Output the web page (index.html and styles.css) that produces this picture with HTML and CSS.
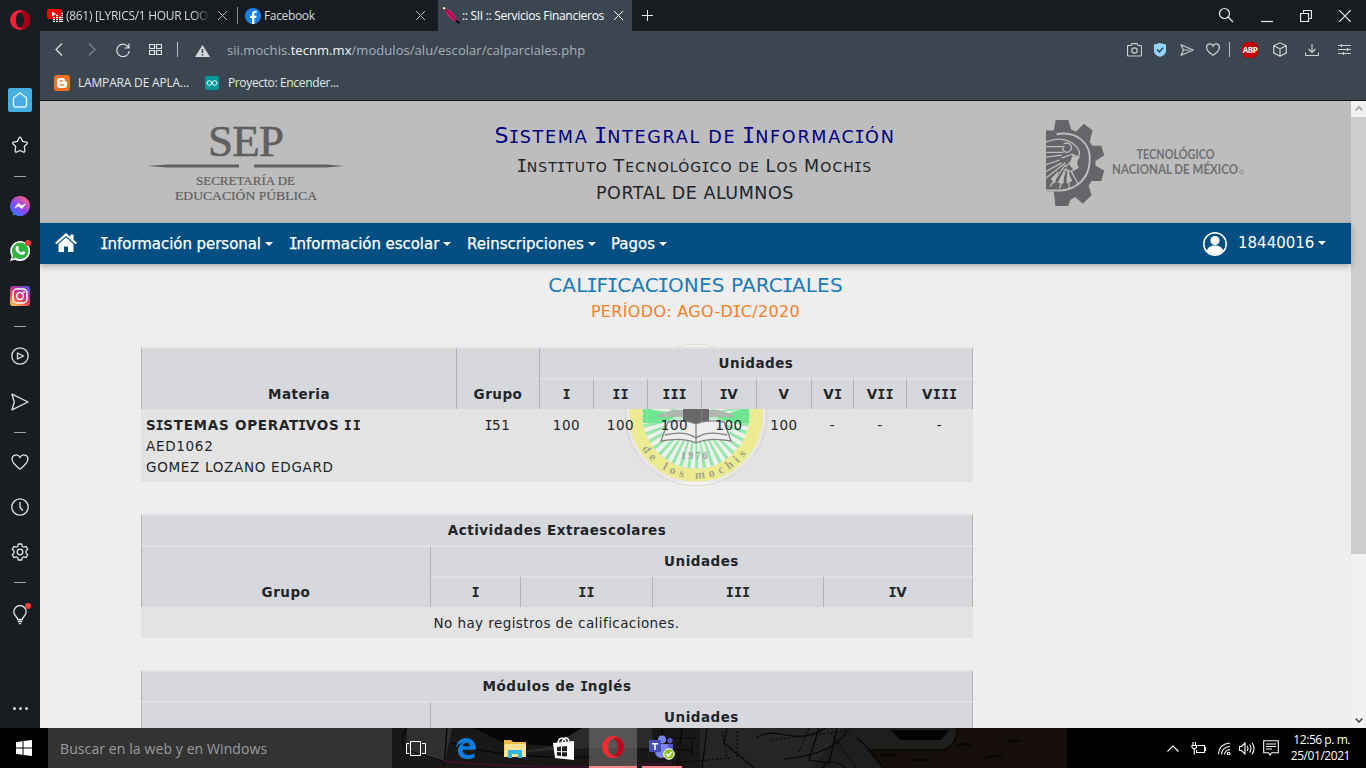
FILE: index.html
```html
<!DOCTYPE html>
<html lang="es">
<head>
<meta charset="utf-8">
<title>:: SII :: Servicios Financieros</title>
<link rel="stylesheet" href="styles.css">
</head>
<body>
<div class="screen">
  <aside class="side">
    <div class="slot slot-opera"><svg width="20" height="20" viewBox="0 0 20 20"><path fill="#fa1e36" fill-rule="evenodd" d="M10 0a10 10 0 1 0 0 20a10 10 0 0 0 0-20zM10 2.500c2.500 0 4.200 3.400 4.200 7.500s-1.700 7.500-4.200 7.500s-4.200-3.400-4.200-7.500s1.700-7.500 4.200-7.500z"/><path fill="#a70014" d="M10 2.500c2-1.800 5-1.500 6.700.1a10 10 0 0 1 0 14.800c-1.700 1.600-4.700 1.900-6.700.1c2.500 0 4.200-3.400 4.200-7.500s-1.700-7.500-4.200-7.500z"/></svg></div>
    <div class="slot slot-home"><span class="home-tile"><svg width="24" height="24" viewBox="0 0 24 24" class="ln thin"><path d="M5.500 10L12 4.800l6.500 5.200v7a2 2 0 0 1-2 2h-9a2 2 0 0 1-2-2z" stroke-linejoin="round"/></svg></span></div>
    <div class="slot"><svg width="18" height="18" viewBox="0 0 18 18" class="ln"><path d="M9 1.200q.6 0 1 .8l1.600 3.400l4 .7q1.300.5.500 1.600L13.300 10.500l.6 4.600q-.1 1.400-1.400 1L9 14.500l-3.500 1.600q-1.300.4-1.400-1l.6-4.600L1.900 7.700q-.8-1.100.5-1.600l4-.7L8 2q.4-.8 1-.8z" stroke-linejoin="round"/></svg></div>
    <div class="dash first"></div>
    <div class="slot"><svg width="20" height="20" viewBox="0 0 20 20"><defs><linearGradient id="ms" x1="0" y1="1" x2=".8" y2="0"><stop offset="0" stop-color="#168aff"/><stop offset=".5" stop-color="#8a45f5"/><stop offset="1" stop-color="#ff6670"/></linearGradient></defs><path fill="url(#ms)" d="M10 0a10 10 0 1 1-5.500 18.400L3 20v-3A10 10 0 0 1 10 0z"/><path fill="#fff" d="M4 12.500L8.200 7l3.600 2.500L16.300 7.300L12 13L8.400 10.500z"/></svg></div>
    <div class="slot badge"><svg width="20" height="20" viewBox="0 0 20 20"><path fill="#fff" d="M10 0a10 10 0 1 1-4.800 18.700L.2 20l1.500-4.800A10 10 0 0 1 10 0z"/><circle cx="10.200" cy="9.900" r="8.300" fill="#32b443"/><path d="M2 18l1-4l3 3z" fill="#32b443"/><path fill="#fff" d="M6.300 5.500c1-1 1.700-.8 2.200.9s-.3 1.300-.3 2c.8 1.400 1.700 2.300 3.300 3c.6-.2.900-1.500 1.600-1.200c2.200 1 2.400 1 1.700 2.300c-1.300 1.900-3.600 1.500-5.600.3c-2.700-1.700-4.800-4.700-2.900-7.300z"/></svg></div>
    <div class="slot"><svg width="20" height="20" viewBox="0 0 20 20"><defs><linearGradient id="ig" x1=".1" y1="1" x2=".7" y2="0"><stop offset="0" stop-color="#ffcf57"/><stop offset=".4" stop-color="#ee4653"/><stop offset=".7" stop-color="#c33193"/><stop offset="1" stop-color="#6052d0"/></linearGradient></defs><rect width="20" height="20" rx="3" fill="url(#ig)"/><g fill="none" stroke="#fff" stroke-width="1.500"><rect x="3" y="3" width="14" height="14" rx="4"/><circle cx="10" cy="10" r="3.400"/></g><circle cx="14" cy="6" r="1" fill="#fff"/></svg></div>
    <div class="dash second"></div>
    <div class="slot tall"><svg width="18" height="18" viewBox="0 0 18 18" class="ln"><circle cx="9" cy="9" r="8.200"/><path d="M6.500 6l6 3l-6 3z" stroke-linejoin="round"/></svg></div>
    <div class="slot tall"><svg width="18" height="18" viewBox="0 0 18 18" class="ln"><path d="M1 1.200L17 9L1 16.800L3.300 9z" stroke-linejoin="round"/></svg></div>
    <div class="dash"></div>
    <div class="slot"><svg width="18" height="18" viewBox="0 0 18 18" class="ln"><path d="M9 16.200C5 13 1 9.500 1 6C1 1.500 7 .5 9 4.500C11 .5 17 1.500 17 6c0 3.500-4 7-8 10.200z" stroke-linejoin="round"/></svg></div>
    <div class="slot"><svg width="18" height="18" viewBox="0 0 18 18" class="ln"><circle cx="9" cy="9" r="8.200"/><path d="M9 4v5.500l3 3"/></svg></div>
    <div class="slot"><svg width="18" height="18" viewBox="0 0 18 18" class="ln"><circle cx="9" cy="9" r="2.800"/><path stroke-linejoin="round" d="M7.300 1h3.400l.5 2.300l1.600.9l2.200-.8l1.700 2.900L15 8v2l1.700 1.700l-1.700 2.900l-2.200-.8l-1.600.9l-.5 2.300H7.300l-.5-2.300l-1.600-.9l-2.200.8l-1.700-2.900L3 10V8L1.300 6.300L3 3.400l2.200.8l1.600-.9z"/></svg></div>
    <div class="dash"></div>
    <div class="slot tall badge bulb"><svg width="16" height="20" viewBox="0 0 16 20" class="ln"><path d="M5.700 14.500C5.500 12 1.800 10.500 1.800 6.800a6.200 6.200 0 0 1 12.400 0c0 3.700-3.700 5.200-3.900 7.700zM5.800 16.500h4.400M6.800 18.700h2.400"/></svg></div>
    <div class="dots"><i></i><i></i><i></i></div>
  </aside>

  <div class="browser">
    <div class="tabs">
      <div class="tab tab-a"><svg width="16" height="15" viewBox="0 0 16 15"><rect y="1" width="14" height="10" rx="2" fill="#f00"/><path fill="#fff" d="M5 3.500L9 6L5 8.500z"/><path stroke="#fff" stroke-width="2" stroke-dasharray="1.200 .8" d="M7 14V9M10 14V6M13 14V8M15.200 14V4"/></svg><span class="t-a">(861) [LYRICS/1 HOUR LOO</span><svg class="x" width="9" height="9" viewBox="0 0 9 9"><path d="M0 0l9 9M9 0L0 9"/></svg></div>
      <div class="tab tab-b"><svg width="16" height="16" viewBox="0 0 16 16"><circle cx="8" cy="8" r="8" fill="#1482ef"/><path fill="#fff" d="M7 16V10H5V7.700h2V6c0-2.200 1.300-3.300 3.200-3.300l1.500.1v2h-1c-1 0-1.300.6-1.300 1.200v1.700h2.200L11.200 10H9.400v6z"/></svg><span class="t-b">Facebook</span><svg class="x" width="9" height="9" viewBox="0 0 9 9"><path d="M0 0l9 9M9 0L0 9"/></svg></div>
      <div class="tab tab-c"><svg width="17" height="17" viewBox="0 0 17 17"><path d="M1 1l7 3l4.500 5.500l3.500 6l-6-2L4 8z" fill="#e0146a"/><path d="M2 2l14 13.500" stroke="#3a0a3c" stroke-width="1"/><path d="M13 14l3.500 2" stroke="#000" stroke-width="1.500"/><circle cx="1.200" cy="1.200" r="1.200" fill="#f5efb0"/></svg><span class="t-c">:: SII :: Servicios Financieros</span><svg class="x on" width="9" height="9" viewBox="0 0 9 9"><path d="M0 0l9 9M9 0L0 9"/></svg></div>
      <svg class="plus" width="11" height="11" viewBox="0 0 11 11"><path d="M5.500 0v11M0 5.500h11"/></svg>
      <div class="win">
        <svg width="16" height="16" viewBox="0 0 16 16"><circle cx="6.500" cy="6.500" r="5"/><path d="M10 10l5 5"/></svg>
        <svg width="12" height="12" viewBox="0 0 12 12"><path d="M0 8.500h12"/></svg>
        <svg width="12" height="12" viewBox="0 0 12 12"><path d="M.5 3.500h8v8h-8zM3.500 3.500v-3h8v8h-3"/></svg>
        <svg width="12" height="12" viewBox="0 0 12 12"><path d="M0 0l12 12M12 0L0 12"/></svg>
      </div>
    </div>

    <div class="bar">
      <svg width="8" height="13" viewBox="0 0 8 13"><path d="M7 .5l-6 6l6 6"/></svg>
      <svg class="dim" width="8" height="13" viewBox="0 0 8 13"><path d="M1 .5l6 6l-6 6"/></svg>
      <svg width="14" height="14" viewBox="0 0 14 14"><path d="M12.500 4.500A6.200 6.200 0 1 0 13.200 8M13 .5V5H8.500"/></svg>
      <svg width="13" height="11" viewBox="0 0 13 11"><path d="M.5.500h5v4h-5zM7.500.5h5v4h-5zM.5 6.500h5v4h-5zM7.500 6.500h5v4h-5z"/></svg>
      <i class="sep"></i>
      <svg class="warn" width="15" height="12" viewBox="0 0 15 12"><path d="M7.500 0L15 12H0z"/><path class="mark" d="M6.700 4h1.600v4H6.700zM6.700 9h1.600v1.500H6.700z"/></svg>
      <span class="url">sii.mochis.<b>tecnm.mx</b>/modulos/alu/escolar/calparciales.php</span>
      <div class="tools">
        <svg width="15" height="14" viewBox="0 0 15 14"><path d="M.5 3.500a1 1 0 0 1 1-1H4L5 .6h5l1 1.900h2.500a1 1 0 0 1 1 1v8.500a1 1 0 0 1-1 1h-12a1 1 0 0 1-1-1z"/><circle cx="7.500" cy="7.500" r="2.700"/></svg>
        <svg class="shield" width="12" height="14" viewBox="0 0 12 14"><path d="M6 0l6 1.500V8c0 3-3 5-6 6C3 13 0 11 0 8V1.500z"/><path class="tick" d="M3 6.500l2.300 2.300L9.200 4.800"/></svg>
        <svg width="14" height="12" viewBox="0 0 14 12"><path d="M1 .7L13.300 6L1 11.300L3.500 6zM3.500 6h6" stroke-linejoin="round"/></svg>
        <svg width="14" height="13" viewBox="0 0 14 13"><path d="M7 12.300C3.500 10 .6 7.500.6 4.500C.6.200 5.800-.3 7 3C8.200-.3 13.400.2 13.400 4.500c0 3-2.900 5.500-6.400 7.800z"/></svg>
        <i class="sep"></i>
        <span class="abp">ABP</span>
        <svg width="14" height="15" viewBox="0 0 14 15"><path stroke-linejoin="round" d="M7 .7l6.300 3v7.200L7 14.300L.7 10.900V3.700zM.7 3.700L7 6.800l6.300-3.100M7 6.800v7.500"/></svg>
        <svg width="14" height="12" viewBox="0 0 14 12"><path d="M7 0v8M3.500 5L7 8.500L10.500 5M.5 8.500v3h13v-3"/></svg>
        <svg width="13" height="11" viewBox="0 0 13 11"><path d="M0 1.500h13M0 5.500h13M0 9.500h13M3.500 0v3M9.500 4v3M5.500 8v3"/></svg>
      </div>
    </div>

    <div class="marks">
      <svg width="16" height="16" viewBox="0 0 16 16"><rect width="16" height="16" rx="3" fill="#f27121"/><path fill="#fff" d="M6 3h2.500a2.500 2.500 0 0 1 2.500 2.500c0 1.500 2 .5 2 2V10a3 3 0 0 1-3 3H6a3 3 0 0 1-3-3V6a3 3 0 0 1 3-3z"/><path stroke="#f27121" stroke-width="1.300" stroke-linecap="round" d="M6 6h2M6 9.800h4"/></svg>
      <span class="m-a">LAMPARA DE APLA...</span>
      <svg width="14" height="14" viewBox="0 0 14 14"><rect width="14" height="14" rx="2" fill="#00979c"/><g fill="none" stroke="#e8ffff"><circle cx="4.300" cy="7" r="2.300"/><circle cx="9.700" cy="7" r="2.300"/></g></svg>
      <span class="m-b">Proyecto: Encender...</span>
    </div>

    <div class="view">
      <div class="page">
        <header class="head">
          <svg class="sep-logo" width="200" height="90" viewBox="0 0 200 90"><g fill="#606060" font-family="'Liberation Serif',serif"><text x="61" y="39.500" font-size="45" textLength="76" lengthAdjust="spacing" stroke="#606060" stroke-width=".6">SEP</text><path d="M0 50l20-1.500h72v3H20zM107 48.500h72l18 1.500l-18 1.500h-72z"/><text x="49" y="68.500" font-size="12.500" stroke="#606060" stroke-width=".2" textLength="99" lengthAdjust="spacingAndGlyphs">SECRETARÍA DE</text><text x="28" y="84" font-size="13.500" stroke="#606060" stroke-width=".2" textLength="142" lengthAdjust="spacingAndGlyphs">EDUCACIÓN PÚBLICA</text></g></svg>
          <div class="titles"><div class="ti-a"><b>S</b><i>i</i>stema <b><i>I</i></b>ntegral de <b><i>I</i></b>nformac<i>i</i>ón</div><div class="ti-b"><b><i>I</i></b>nst<i>i</i>tuto <b>T</b>ecnológ<i>i</i>co de <b>L</b>os <b>M</b>och<i>i</i>s</div><div class="ti-c">PORTAL DE ALUMNOS</div></div>
          <svg class="tec-logo" width="200" height="86" viewBox="0 0 200 86">
            <g transform="scale(.97 .952)"><path fill="#66666a" d="M0 11h8l2-11h13l3 10l5 2l8-8l9 7l-3 12l3 4l9 0l3 10l-9 6v5l9 5l-3 11h-10l-3 5l3 10l-9 9l-8-7l-5 3l-3 9H10L8 75H0z"/>
            <g fill="none" stroke="#bdbdbd" stroke-width="1.300"><path stroke-width="2" d="M11 15c21-4 36 10 34 29c-1 18-14 29-30 30H0"/><path d="M0 23c10-4 21-4 28 2c6 5 8 10 5 14M0 28h17M0 34h18M0 39l16-2M18 25c7-3 11 4 6 8c-5 3-9-3-5-6M27 36l7 3l-4 6l3 5l-7 4l-8-2M16 40l11-4l3 4l-10 9M20 45L0 61M20 47L4 70M21 50L14 72M23 52l1 20M26 54l7 13M0 47l14-5M0 54l16-9"/></g>
            <path fill="#bdbdbd" d="M27 38l7 1l-2 5l1 6l-4 3l-5-6zM5 62l8-9l-4 14zM12 66l7-14l-1 15zM21 67l1-14l5 11z"/></g>
            <g fill="#707074" font-family="Lato,sans-serif" font-weight="bold" font-size="12.500"><text x="90.500" y="38.500" textLength="78" lengthAdjust="spacingAndGlyphs">TECNOLÓGICO</text><text x="66" y="54" textLength="126" lengthAdjust="spacingAndGlyphs">NACIONAL DE MÉXICO</text></g><circle cx="195.500" cy="52" r="1.800" fill="none" stroke="#88888b"/>
          </svg>
        </header>
        <nav class="nav">
          <svg class="house" width="22" height="19" viewBox="0 0 22 19"><path fill="#fff" d="M11 0L0 9.800l1.500 1.500L11 3l9.500 8.300L22 9.800L18.500 6.700V1.500h-3V4zM11 4.500l-7.500 6.600V19H9v-5.500h4V19h5.500v-7.900z"/></svg>
          <div class="n-a drop"><span><i>I</i>nformación personal</span></div><div class="n-b drop"><span><i>I</i>nformación escolar</span></div><div class="n-c drop">Reinscripciones</div><div class="n-d drop">Pagos</div>
          <svg class="user" width="24" height="24" viewBox="0 0 24 24"><circle cx="12" cy="12" r="11.200" fill="#004e82" stroke="#fff" stroke-width="1.500"/><circle cx="12" cy="8.600" r="4.600" fill="#fff"/><path fill="#fff" d="M3.800 19c1-4 4-5.500 8.200-5.500s7.200 1.500 8.200 5.500A11 11 0 0 1 3.800 19z"/></svg>
          <div class="n-e drop">18440016</div>
        </nav>
        <main class="main">
          <svg class="seal" width="142" height="144" viewBox="-71 -72 142 144">
            <circle r="70.500" fill="#f4f3ef" stroke="#c4c2b5" stroke-dasharray="1 1"/><circle r="60" fill="none" stroke="#fbf88c" stroke-width="13"/><circle r="53.500" fill="#fafffb"/>
            <circle r="27" fill="none" stroke="#96f2ae" stroke-width="53" stroke-dasharray="1.800 2.300"/>
            <path fill="#62f28a" d="M-53-8L-20 2l-15 6h-18zM53-8L20 2l15 6h18z"/><path d="M-38 0l15-5h46l15 5v2h-76z" fill="#b4b8b4"/><path fill="#5c5a5d" d="M-13-7h26V10h-26z"/>
            <path fill="#fdfcfc" stroke="#7c7c7c" stroke-width="1.300" d="M-28 7Q-12 4 0 9Q12 4 28 7l7 19q-22-4-35 2q-13-6-35-2zM-31 20q20-5 31 3q11-8 31-3M0 9v19"/>
            <text x="-15" y="44" font-size="10" letter-spacing="2.200" font-family="'Liberation Serif',serif" font-weight="bold" fill="#9a9a98">1976</text>
            <path id="arc" fill="none" d="M-55 32A63.600 63.600 0 0 0 55 32"/><text font-family="'Liberation Serif',serif" font-size="12" font-weight="bold" letter-spacing="4.500" fill="#a3a184"><textPath href="#arc" startOffset="2">de los mochis</textPath></text>
          </svg>
          <h1>CAL<i>I</i>F<i>I</i>CAC<i>I</i>ONES PARC<i>I</i>ALES</h1>
          <h2>PERÍODO: AGO-D<i>I</i>C/2020</h2>
          <section class="grid g1">
            <div class="h low rows2">Materia</div><div class="h low rows2">Grupo</div><div class="h wide8">Unidades</div>
            <div class="h"><i>I</i></div><div class="h"><i>II</i></div><div class="h"><i>III</i></div><div class="h"><i>I</i>V</div><div class="h">V</div><div class="h">V<i>I</i></div><div class="h">V<i>II</i></div><div class="h">V<i>III</i></div>
            <div class="d subject"><b>S<i>I</i>STEMAS OPERAT<i>I</i>VOS <i>II</i></b><br>AED1062<br>GOMEZ LOZANO EDGARD</div><div class="d"><i>I</i>51</div><div class="d">100</div><div class="d">100</div><div class="d">100</div><div class="d">100</div><div class="d">100</div><div class="d">-</div><div class="d">-</div><div class="d">-</div>
          </section>
          <section class="grid g2">
            <div class="h all">Actividades Extraescolares</div>
            <div class="h low rows2">Grupo</div><div class="h wide4">Unidades</div>
            <div class="h"><i>I</i></div><div class="h"><i>II</i></div><div class="h"><i>III</i></div><div class="h"><i>I</i>V</div>
            <div class="d all none">No hay registros de calificaciones.</div>
          </section>
          <section class="grid g2">
            <div class="h all">Módulos de <i>I</i>nglés</div>
            <div class="h rows2"></div><div class="h wide4">Unidades</div>
          </section>
        </main>
      </div>
      <div class="scroll"><svg class="pale" width="8" height="5" viewBox="0 0 8 5"><path d="M.7 4.300L4 1l3.300 3.300"/></svg><i></i><svg width="8" height="5" viewBox="0 0 8 5"><path d="M.7.700L4 4L7.300.7"/></svg></div>
    </div>
  </div>

  <footer class="task">
    <div class="start"><svg width="16" height="16" viewBox="0 0 16 16"><path fill="#fff" d="M0 2.200L6.500 1.200V7.500H0zM7.500 1.100L16 0v7.500H7.500zM0 8.500h6.500v6.300L0 13.900zM7.500 8.500H16V16l-8.500-1.100z"/></svg></div>
    <div class="search">Buscar en la web y en Windows</div>
    <div class="desk">
      <svg class="sketch" width="675" height="40" viewBox="0 0 675 40"><path fill="#1a1816" d="M0 0h675v40H0z"/><path fill="#303030" d="M15 0h45l-7 33l-38-8z"/><path fill="#050505" d="M82 0h95l22 20l-86-5zM165 0h35v18z"/><path fill="#2a2a2a" d="M105 28q70-10 155-8V0h-70l-30 18z"/><path fill="#252525" d="M308 0h142v40H308z"/><path fill="#1e1f1c" d="M450 0h115q-2 22-20 21H480l10 19h-70z"/><path fill="#150e0a" d="M565 0h110v40H490l-15-18h70q20 0 20-22z"/><path fill="#030303" d="M499 2h58l-8 10h-41z"/><g fill="none" stroke="#060606" stroke-width="1.200"><path d="M15 0Q6 12 15 22l38 12M55 0l-3 38M60 15q50 16 140 14M364 10q10-8 30-3q20 5 40-7M262 10h42M250 22h50M290 0l-5 40M270 0v10M300 14v14M315 0l-5 40M335 0l-3 15l30 25M445 0l-8 35l-20-3l10-32M475 22h70q20 0 20-22M455 3q-12 23-63 28M465 10q18 15 26 30M430 40q10-12 24 0"/><path stroke-dasharray="2 2" d="M330 3l5 26M345 3v28M417 0l-10 25M380 12l80-10M439 5l25 35M280 35l60-5"/></g><path d="M50 33q120 11 230 2" fill="none" stroke="#42102f" stroke-width="1.500"/><path d="M490 27h14M520 32h20M565 18q8-4 15 0M593 30q10-4 18 0M615 13h14" stroke="#080605" fill="none" stroke-width="2"/></svg>
      <div class="app a1"><svg width="20" height="15" viewBox="0 0 20 15"><path fill="none" stroke="#fff" d="M4.500.5h10v14h-10zM3 2.500H.5v10H3M16 2.500h3.500v10H16"/></svg></div>
      <div class="app a2"><svg width="20" height="21" viewBox="0 0 20 21"><path fill="#0d7ddd" d="M0 9.500C1 3.500 4.500 0 10 0c6 0 9.700 4.500 9.700 9.500v2.200H6.500c.3 5.800 7.500 6.400 12 3.600v4.300C12 22.700 2 21 2 13c0-4.500 2-7 5.500-8.500c-3 .2-5.500 2-7.500 5zM6.700 8.200h7.100c0-4.700-6.300-4.600-7.100 0z"/></svg></div>
      <div class="app a3"><svg width="22" height="19" viewBox="0 0 22 19"><path fill="#f0bc46" d="M0 1h7l2 2h13v14H0z"/><path fill="#ffe394" d="M1 5h21v13H0z"/><path fill="#30b7e6" d="M4 19v-8h14v8h-4v-4H8v4z"/></svg></div>
      <div class="app a4"><svg width="21" height="23" viewBox="0 0 21 23"><path fill="none" stroke="#fff" stroke-width="1.500" d="M5 7c0-7 7-8 8-1M9 5c2-6 7-5 7 1"/><path fill="#fff" fill-rule="evenodd" d="M0 6l21-2v19L2 21zM4 10v4l4 .2V9.600zM9 9.500v4.700h5V8.900zM4 15v3.600l4 .4v-3.800zM9 15.200V19l5 .6v-4.400z"/></svg></div>
      <div class="app a5"><svg width="22" height="22" viewBox="0 0 20 20"><path fill="#f12b36" fill-rule="evenodd" d="M10 0a10 10 0 1 0 0 20a10 10 0 0 0 0-20zM10 2.500c2.500 0 4.200 3.400 4.200 7.500s-1.700 7.500-4.200 7.500s-4.200-3.400-4.200-7.500s1.700-7.500 4.200-7.500z"/><path fill="#b40c1e" d="M10 2.500c2-1.800 5-1.500 6.700.1a10 10 0 0 1 0 14.800c-1.700 1.600-4.700 1.900-6.700.1c2.500 0 4.200-3.400 4.200-7.500s-1.700-7.500-4.200-7.500z"/></svg></div>
      <div class="app a6"><svg width="26" height="25" viewBox="0 0 26 25"><circle cx="13" cy="4.500" r="4" fill="#7b83eb"/><circle cx="21" cy="5.500" r="2.700" fill="#5059c9"/><path fill="#5059c9" d="M16 9h8v7q-1 5-8 4z"/><path fill="#7b83eb" d="M6 9h13v8q-2 6-7 6q-6-1-6-7z"/><rect y="5" width="12" height="12" rx="1" fill="#464eb8"/><path fill="#fff" d="M3 8h6v1.500H6.800V15H5.200V9.500H3z"/><circle cx="20" cy="19" r="5.300" fill="#8dc21f" stroke="#fff"/><path fill="none" stroke="#fff" stroke-width="1.700" d="M17.300 19l2 2l3.500-4"/></svg></div>
    </div>
    <div class="tray">
      <svg width="12" height="7" viewBox="0 0 12 7"><path d="M.5 6.500L6 1l5.500 5.500"/></svg>
      <svg width="15" height="13" viewBox="0 0 15 13"><path d="M6.500 3.500h7v7h-8V8M2 0v3M4.500 0v3M1 3.500h4.500v2L3.300 7.500L1 5.500zM3.300 7v5.500M14.500 5v4"/></svg>
      <svg width="13" height="13" viewBox="0 0 13 13"><path d="M.5 12Q1 2 12 1M3.500 12.500Q4 5 12 4.500M6.500 12.500Q7 8 12 7.500"/><circle cx="10.500" cy="11.500" r="1.300"/></svg>
      <svg width="16" height="13" viewBox="0 0 16 13"><path d="M.5 4.500h2L6 1v11L2.500 8.500h-2zM8 4q2 2.500 0 5M10.500 2.500q3 4 0 8M13 .8q4 5.700 0 11.400"/></svg>
      <svg width="16" height="16" viewBox="0 0 16 16"><path d="M.7.700h14.600v12H9L7 15L5.500 12.700H.7zM3 4h10M3 6.500h10M3 9h6"/></svg>
      <div class="clock"><span class="hr">12:56 p. m.</span><span class="dt">25/01/2021</span></div>
    </div>
  </footer>
</div>
</body>
</html>
```
FILE: styles.css
```css
* { box-sizing: border-box; }
body { margin: 0; overflow: hidden; }
svg { display: block; flex: none; }
.screen { width: 1366px; height: 768px; display: grid; grid-template: 728px 40px / 40px 1326px; overflow: hidden; font-family: "Open Sans", "Noto Sans", sans-serif; }

/* sidebar */
.side { background: #191c21; display: flex; flex-direction: column; height: 728px; }
.slot { height: 45px; display: flex; align-items: center; justify-content: center; position: relative; flex: none; padding-bottom: 1px; }
.slot-opera { height: 40px; margin-bottom: 38px; padding: 0; }
.tall { height: 46px; padding: 0; }
.home-tile { background: #47aee4; border-radius: 2px; }
.ln { fill: none; stroke: #dfe2e6; stroke-width: 1.3; }
.thin { stroke: #e6f6ff; }
.dash { height: 15px; flex: none; display: grid; place-items: center; }
.dash.first { height: 16px; }
.dash.second { height: 14px; }
.dash::before { content: ""; width: 12px; height: 1px; background: #9ea3a8; }
.badge::after { content: ""; position: absolute; left: 25px; top: 11px; width: 6px; height: 6px; border-radius: 50%; background: #f5403b; }
.bulb { padding-top: 3px; }
.bulb::after { top: 13px; }
.dots { margin-top: auto; height: 40px; display: flex; gap: 3px; align-items: center; justify-content: center; }
.dots i { width: 3px; height: 3px; border-radius: 50%; background: #e4e6e8; }

/* browser chrome */
.browser { height: 728px; display: flex; flex-direction: column; min-width: 0; }
.tabs { height: 31px; flex: none; background: #181b1f; display: flex; align-items: center; color: #d5d8da; font-size: 12px; }
.tab { height: 31px; display: flex; align-items: center; white-space: nowrap; }
.tab-a { width: 197px; padding: 0 10px 0 7px; }
.tab-a > svg:first-child { margin-right: 3px; }
.tab-b { width: 201px; padding: 0 13px 0 8px; position: relative; }
.tab-b::before { content: ""; position: absolute; left: 0; top: 7px; width: 1px; height: 17px; background: #85898e; }
.tab-b > svg:first-child { margin-right: 3px; }
.tab-c { width: 194px; padding: 0 9px 0 5px; background: #3b4651; color: #fff; }
.t-a { letter-spacing: -.3px; width: 144px; overflow: hidden; -webkit-mask-image: linear-gradient(90deg, #000 88%, transparent); mask-image: linear-gradient(90deg, #000 88%, transparent); }
.t-b { letter-spacing: -.35px; }
.t-c { letter-spacing: -.3px; margin-left: 2px; }
.x { margin-left: auto; stroke: #b2b5b8; }
.x.on { stroke: #fff; }
.plus { stroke: #e4e6e8; margin-left: 10px; }
.win { margin-left: auto; display: flex; align-items: center; gap: 27px; padding-right: 15px; fill: none; stroke: #e8eaec; stroke-width: 1.2; }
.win svg:nth-child(1) { margin-top: -2px; }
.win svg:nth-child(2) { margin-top: 6px; }
.bar { height: 39px; flex: none; background: #3b4651; display: flex; align-items: center; padding: 0 0 2px 15px; fill: none; stroke: #dfe3e7; stroke-width: 1.2; }
.bar > svg { margin-right: 25px; }
.bar > svg:nth-child(3) { margin-right: 19px; }
.bar > svg:nth-child(4) { margin-right: 15px; }
.bar > .dim { stroke: #7e878f; margin-right: 20px; }
.sep { width: 1px; height: 15px; background: #b8bfc5; }
.bar > .warn { fill: #d5d8db; stroke: none; margin: 2px 17px 0 17px; }
.warn .mark { fill: #3b4651; }
.url { color: #a7b1ba; font-size: 13px; white-space: nowrap; letter-spacing: .05px; }
.url b { color: #f2f5f7; font-weight: normal; }
.tools { margin-left: auto; display: flex; align-items: center; padding-right: 15px; stroke: #c8ced3; }
.tools svg:nth-child(1) { margin-right: 12px; }
.tools svg:nth-child(3) { margin-right: 12px; }
.tools svg:nth-child(2) { margin-right: 14px; }
.tools svg:nth-child(4) { margin-right: 9px; }
.tools svg:nth-child(7) { margin: 0 18px 0 15px; }
.tools svg:nth-child(8) { margin-right: 19px; }
.shield { fill: #91d4fc; stroke: none; }
.shield .tick { fill: none; stroke: #2e4e68; stroke-width: 1.600; }
.abp { width: 16px; height: 16px; border-radius: 6px; background: #c70000; color: #fff; font: bold 8px/16px "Open Sans", sans-serif; letter-spacing: -.4px; text-align: center; margin-left: 12px; }
.marks { height: 31px; flex: none; background: #3b4651; border-bottom: 1px solid #15181b; display: flex; align-items: center; padding: 0 0 5px 14px; color: #e3e6e8; font-size: 12px; white-space: nowrap; }
.m-a { margin: 0 16px 0 8px; letter-spacing: -.18px; }
.m-b { margin-left: 9px; letter-spacing: -.35px; }

/* portal page */
.view { height: 627px; display: flex; overflow: hidden; }
.page { width: 1311px; background: #eee; font-family: Verdana, "DejaVu Sans", sans-serif; color: #212529; }
/* capital I with serifs */
.page i { font-family: "DejaVu Sans Mono", monospace; font-style: normal; margin: 0 -.08em; }
.head { height: 122px; background: #bdbdbd; display: flex; }
.sep-logo { margin: 15px 0 0 107px; }
.titles { width: 500px; margin-left: 98px; text-align: center; white-space: nowrap; text-transform: uppercase; }
.titles b { font-weight: normal; font-size: 1.25em; }
.ti-a { font-size: 17.600px; line-height: 30px; margin-top: 20px; color: #000080; letter-spacing: 1.7px; }
.ti-b { font-size: 14px; line-height: 28px; letter-spacing: 1.1px; }
.ti-c { font-size: 17.500px; line-height: 24px; letter-spacing: .55px; }
.tec-logo { margin: 19px 0 0 101px; }
.nav { height: 41px; background: #004e82; position: relative; box-shadow: 0 2px 6px rgba(0,0,0,.3); display: flex; align-items: center; color: #fff; font-size: 15px; white-space: nowrap; padding-left: 15px; -webkit-text-stroke: .25px #fff; }
.house { margin-right: 24px; margin-bottom: 2px; }
.drop { display: flex; align-items: center; }
.drop::after { content: ""; border: 4.500px solid transparent; border-top-color: #fff; border-bottom: 0; margin-left: 4px; }
.n-a { width: 189px; letter-spacing: -.05px; }
.n-b { width: 177px; letter-spacing: -.05px; }
.n-c { width: 144px; }
.user { margin-left: auto; margin-right: 11px; }
.n-e { width: 113px; -webkit-text-stroke: 0; padding-bottom: 2px; }
.main { height: 464px; position: relative; overflow: hidden; text-align: center; z-index: 0; }
h1, h2 { margin: 0; font-weight: normal; white-space: nowrap; }
h1 { font-size: 20px; line-height: 28px; padding-top: 7px; color: #1a7bb9; letter-spacing: .15px; }
h2 { font-size: 16px; line-height: 26px; color: #f58025; margin-bottom: 22px; letter-spacing: .35px; }
.seal { position: absolute; left: 585px; top: 79px; z-index: -1; }
.grid { width: 832px; margin: 0 0 32px 101px; display: grid; font-size: 13.500px; letter-spacing: .6px; line-height: 21px; }
.g1 { grid-template-columns: 316px 83px 54px 54px 54px 55px 55px 42px 53px 66px; grid-template-rows: 31px 31px 73px; }
.g2 { grid-template-columns: 290px 90px 132px 171px 149px; grid-auto-rows: 31px; }
.h { background: #d6d8dc; font-weight: bold; border-right: 1px solid #afb2b7; border-top: 2px solid #e0e1e4; padding-top: 4px; letter-spacing: .5px; }
.h i { letter-spacing: 0; margin: 0 -.02em; }
.h.low { padding-top: 35px; }
.rows2 { grid-row: span 2; }
.wide8 { grid-column: span 8; }
.wide4 { grid-column: span 4; }
.all { grid-column: 1 / -1; }
.h.all, .h.rows2:nth-child(1), .g2 .rows2 { border-left: 1px solid #afb2b7; }
.d { background: rgba(170,170,170,.17); padding-top: 6px; border-right: 1px solid rgba(240,240,240,.2); }
.subject { text-align: left; padding-left: 5px; white-space: nowrap; letter-spacing: .7px; }
.subject b { letter-spacing: .75px; }
.none { letter-spacing: .43px; }
.scroll { width: 15px; background: #f1f1f1; display: flex; flex-direction: column; align-items: center; fill: none; stroke: #505050; stroke-width: 1.700; padding: 5px 0; }
.scroll .pale { stroke: #a3a3a3; }
.scroll i { width: 15px; height: 437px; background: #cdcdcd; margin-top: 6px; }
.scroll svg:last-child { margin-top: auto; }

/* taskbar */
.task { grid-column: 1 / -1; background: #000; display: flex; height: 40px; }
.start { width: 48px; display: grid; place-items: center; }
.search { width: 344px; background: #333; color: #9c9c9c; font-size: 14px; line-height: 41px; padding-left: 12px; letter-spacing: .1px; white-space: nowrap; }
.desk { width: 675px; display: flex; position: relative; }
.sketch { position: absolute; left: 0; top: 0; }
.app { position: relative; display: grid; place-items: center; height: 40px; }
.a1 { width: 48px; }
.a2, .a3, .a4 { width: 48px; }
.a2 { margin-left: 2px; }
.a3 { margin-left: 1px; }
.a4 { margin-right: 2px; }
.a5 { width: 48px; background: rgba(120,120,120,.55); border-bottom: 2px solid #f8888c; }
.a6 { width: 40px; margin-left: 5px; border-bottom: 2px solid #f8888c; }
.tray { margin-left: auto; display: flex; align-items: center; fill: none; stroke: #fff; stroke-width: 1.100; padding-right: 16px; }
.tray svg { margin-right: 12px; }
.tray svg:nth-child(3), .tray svg:nth-child(4) { margin-right: 8px; }
.clock { color: #fff; font-size: 12px; line-height: 16px; text-align: right; display: flex; flex-direction: column; letter-spacing: -.45px; white-space: nowrap; }
```
